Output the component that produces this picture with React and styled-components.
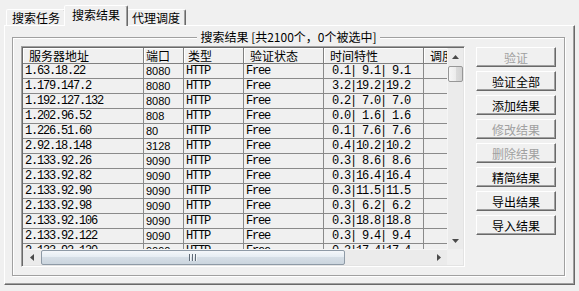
import React from 'react';
import styled, { createGlobalStyle } from 'styled-components';

const GlobalStyle = createGlobalStyle`
  html, body { margin: 0; padding: 0; background: #f0f0f0; }
  body {
    font-family: "Noto Sans CJK SC", "Liberation Sans", sans-serif;
    font-size: 12px;
    color: #000;
  }
`;

const CJK = `"Noto Sans CJK SC", "Liberation Sans", sans-serif`;

const Window = styled.div`
  width: 579px;
  height: 291px;
  box-sizing: border-box;
  padding: 5px 4px 0 4px;
  background: #f0f0f0;
  overflow: hidden;
`;

const TabStrip = styled.div`
  display: flex;
  align-items: flex-end;
  height: 20px;
  padding-left: 2px;
`;

const Tab = styled.div`
  position: relative;
  z-index: ${p => (p.$active ? 2 : 1)};
  box-sizing: border-box;
  height: ${p => (p.$active ? 21 : 16)}px;
  margin: 0 ${p => (p.$active ? -2 : 0)}px ${p => (p.$active ? -1 : 0)}px;
  padding: 0 ${p => (p.$active ? 7 : 5)}px;
  display: flex;
  align-items: center;
  background: #f0f0f0;
  border: 1px solid;
  border-bottom: none;
  border-color: #fff #696969 transparent #fff;
  border-radius: 2px 2px 0 0;
  box-shadow: inset -1px 0 0 #a0a0a0;
  font-family: ${CJK};
  font-size: 12px;
  line-height: 14px;
  padding-bottom: ${p => (p.$active ? 3 : 0)}px;
  white-space: nowrap;
`;

const Panel = styled.div`
  box-sizing: border-box;
  height: 260px;
  border: 1px solid;
  border-color: #fff #696969 #696969 #fff;
  box-shadow: inset -1px -1px 0 #a0a0a0;
  padding: 3px 9px 8px 7px;
`;

const GroupBox = styled.fieldset`
  margin: 0;
  padding: 0 8px 8px;
  min-width: 0;
  border: 1px solid #a0a0a0;
  box-shadow: inset 1px 1px 0 #fff, 1px 1px 0 #fff;
  display: flex;
  align-items: flex-start;
  gap: 11px;
`;

const Legend = styled.legend`
  margin: 0 auto;
  padding: 0 3px;
  height: 16px;
  line-height: 16px;
  font-family: ${CJK};
  font-size: 12px;
  background: #f0f0f0;
  white-space: pre;
`;

const ListView = styled.div`
  flex: none;
  box-sizing: border-box;
  width: 444px;
  height: 221px;
  margin-top: 1px;
  border: 1px solid;
  border-color: #a0a0a0 #fff #fff #a0a0a0;
  box-shadow: inset 1px 1px 0 #696969, inset -1px -1px 0 #e3e3e3;
  padding: 1px;
  display: grid;
  grid-template-columns: 1fr 16px;
  grid-template-rows: 1fr 16px;
  background: #f0f0f0;
`;

const ListBody = styled.div`
  overflow: hidden;
  min-width: 0;
  min-height: 0;
`;

const Row = styled.div`
  display: grid;
  grid-template-columns: ${p => p.$cols};
  width: max-content;
  height: ${p => (p.$head ? 16 : 15)}px;
`;

const HeadCell = styled.div`
  box-sizing: border-box;
  height: 16px;
  padding-left: ${p => p.$pad}px;
  border-right: 1px solid #808080;
  border-bottom: 1px solid #808080;
  box-shadow: inset 1px 1px 0 #fff;
  font-family: ${CJK};
  font-size: 12px;
  line-height: 15px;
  white-space: nowrap;
  overflow: hidden;
`;

const Cell = styled.div`
  box-sizing: border-box;
  height: 15px;
  padding-left: 2px;
  border-right: 1px solid #8a8a8a;
  border-bottom: 1px solid #8a8a8a;
  font-family: ${p => (p.$sans ? `"Liberation Sans", sans-serif` : `"Liberation Mono", monospace`)};
  font-size: ${p => (p.$sans ? 11 : 12)}px;
  letter-spacing: ${p => (p.$sans ? 0 : -1.2)}px;
  line-height: 14px;
  white-space: pre;
  overflow: hidden;
`;

const VScroll = styled.div`
  display: flex;
  flex-direction: column;
  background: #ebebeb;
  box-shadow: inset 1px 0 0 #f5f5f5;
`;

const HScroll = styled.div`
  display: flex;
  background: #ebebeb;
  box-shadow: inset 0 1px 0 #f5f5f5;
`;

const Corner = styled.div`
  background: #f0f0f0;
`;

const ArrowButton = styled.div`
  flex: none;
  width: ${p => (p.$horizontal ? 17 : 16)}px;
  height: ${p => (p.$horizontal ? 16 : 17)}px;
  display: flex;
  align-items: center;
  justify-content: center;
`;

const Track = styled.div`
  flex: 1;
  display: flex;
  flex-direction: ${p => (p.$horizontal ? 'row' : 'column')};
`;

const VThumb = styled.div`
  box-sizing: border-box;
  width: 15px;
  height: 16px;
  margin: 1px 0 0 1px;
  border: 1px solid #979797;
  border-radius: 2px;
  background: linear-gradient(to right, #f6f6f6 0%, #ececec 50%, #dcdcdc 51%, #d2d2d2 100%);
`;

const HThumb = styled.div`
  position: relative;
  box-sizing: border-box;
  width: ${p => p.$w}px;
  height: 15px;
  margin: 1px 0 0 1px;
  border: 1px solid #8e9aa6;
  border-radius: 2px;
  background: linear-gradient(to bottom, #f4f7fa 0%, #e6edf3 45%, #d5dee6 50%, #cbd5de 100%);
  &::after {
    content: "";
    position: absolute;
    left: 50%;
    top: 3px;
    width: 8px;
    height: 7px;
    margin-left: -4px;
    background: repeating-linear-gradient(to right, #5f6b77 0 1px, #f2f5f8 1px 2px, transparent 2px 3px);
  }
`;

const ButtonColumn = styled.div`
  flex: none;
  display: flex;
  flex-direction: column;
  gap: 4px;
  margin-top: 2px;
`;

const Button = styled.button`
  box-sizing: border-box;
  width: 80px;
  height: 20px;
  padding: 0;
  background: #f0f0f0;
  border: 1px solid;
  border-color: #fff #696969 #696969 #fff;
  box-shadow: inset -1px -1px 0 #a0a0a0;
  font-family: ${CJK};
  font-size: 12px;
  line-height: 17px;
  color: ${p => (p.disabled ? '#a0a0a0' : '#000')};
`;

const Arrow = ({ dir }) => {
  const pts = {
    up: '0,4 3.5,0 7,4',
    down: '0,0 7,0 3.5,4',
    left: '4,0 4,7 0,3.5',
    right: '0,0 0,7 4,3.5',
  }[dir];
  const wide = dir === 'up' || dir === 'down';
  return (
    <svg width={wide ? 7 : 4} height={wide ? 4 : 7} viewBox={wide ? '0 0 7 4' : '0 0 4 7'}>
      <polygon points={pts} fill="#4a4a4a" />
    </svg>
  );
};

const columns = [
  { title: '服务器地址', w: 121, pad: 6 },
  { title: '端口', w: 40, pad: 2 },
  { title: '类型', w: 60, pad: 4 },
  { title: '验证状态', w: 80, pad: 6 },
  { title: '时间特性', w: 100, pad: 6 },
  { title: '调度', w: 80, pad: 6 },
];
const colTemplate = columns.map(c => `${c.w}px`).join(' ');

const rows = [
  ['1.63.18.22', '8080', '0.1', '9.1', '9.1'],
  ['1.179.147.2', '8080', '3.2', '19.2', '19.2'],
  ['1.192.127.132', '8080', '0.2', '7.0', '7.0'],
  ['1.202.96.52', '808', '0.0', '1.6', '1.6'],
  ['1.226.51.60', '80', '0.1', '7.6', '7.6'],
  ['2.92.18.148', '3128', '0.4', '10.2', '10.2'],
  ['2.133.92.26', '9090', '0.3', '8.6', '8.6'],
  ['2.133.92.82', '9090', '0.3', '16.4', '16.4'],
  ['2.133.92.90', '9090', '0.3', '11.5', '11.5'],
  ['2.133.92.98', '9090', '0.3', '6.2', '6.2'],
  ['2.133.92.106', '9090', '0.3', '18.8', '18.8'],
  ['2.133.92.122', '9090', '0.3', '9.4', '9.4'],
  ['2.133.92.130', '9090', '0.3', '17.4', '17.4'],
];

const timing = (a, b, c) => [a, b, c].map(v => v.padStart(4, ' ')).join('|');

const buttons = [
  { label: '验证', disabled: true },
  { label: '验证全部' },
  { label: '添加结果' },
  { label: '修改结果', disabled: true },
  { label: '删除结果', disabled: true },
  { label: '精简结果' },
  { label: '导出结果' },
  { label: '导入结果' },
];

export default function App() {
  return (
    <>
      <GlobalStyle />
      <Window>
        <TabStrip>
          <Tab>搜索任务</Tab>
          <Tab $active>搜索结果</Tab>
          <Tab>代理调度</Tab>
        </TabStrip>
        <Panel>
          <GroupBox>
            <Legend>搜索结果 [共2100个，0个被选中]</Legend>
            <ListView>
              <ListBody>
                <Row $head $cols={colTemplate}>
                  {columns.map(c => (
                    <HeadCell key={c.title} $pad={c.pad}>{c.title}</HeadCell>
                  ))}
                </Row>
                {rows.map(r => (
                  <Row key={r[0]} $cols={colTemplate}>
                    <Cell>{r[0]}</Cell>
                    <Cell $sans>{r[1]}</Cell>
                    <Cell>HTTP</Cell>
                    <Cell>Free</Cell>
                    <Cell>{timing(r[2], r[3], r[4])}</Cell>
                    <Cell />
                  </Row>
                ))}
              </ListBody>
              <VScroll>
                <ArrowButton><Arrow dir="up" /></ArrowButton>
                <Track>
                  <VThumb />
                </Track>
                <ArrowButton><Arrow dir="down" /></ArrowButton>
              </VScroll>
              <HScroll>
                <ArrowButton $horizontal><Arrow dir="left" /></ArrowButton>
                <Track $horizontal>
                  <HThumb $w={304} />
                </Track>
                <ArrowButton $horizontal><Arrow dir="right" /></ArrowButton>
              </HScroll>
              <Corner />
            </ListView>
            <ButtonColumn>
              {buttons.map(b => (
                <Button key={b.label} disabled={b.disabled}>{b.label}</Button>
              ))}
            </ButtonColumn>
          </GroupBox>
        </Panel>
      </Window>
    </>
  );
}
